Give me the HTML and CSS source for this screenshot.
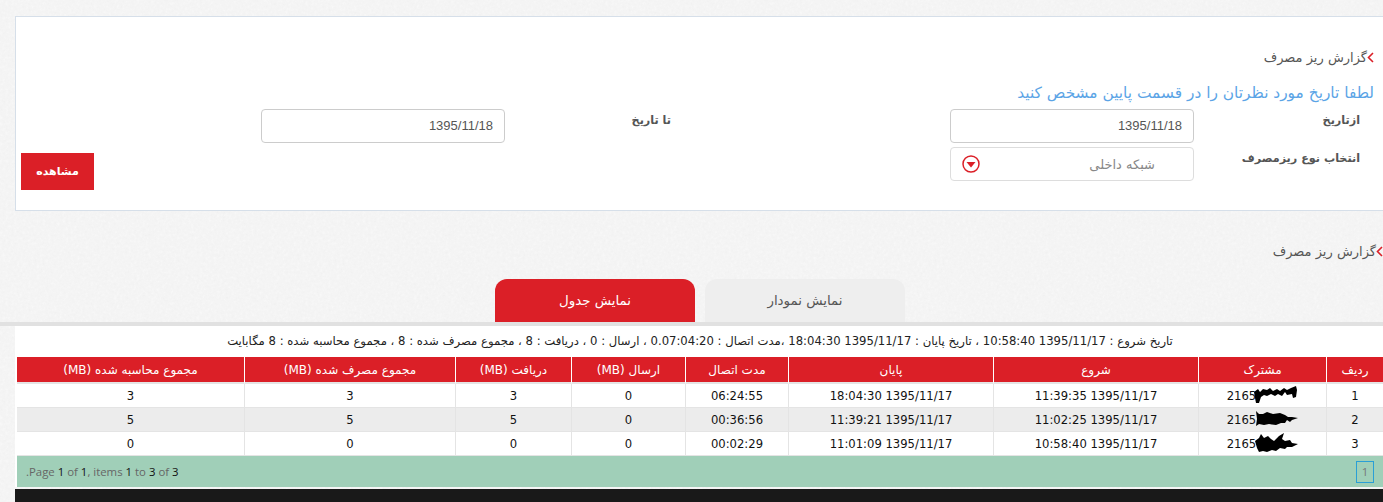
FILE: index.html
```html
<!DOCTYPE html>
<html lang="fa" dir="rtl">
<head>
<meta charset="utf-8">
<title>گزارش ریز مصرف</title>
<link rel="stylesheet" href="styles.css">
</head>
<body>
<section class="panel">
  <h2 class="title"><svg class="chev" width="7" height="11" viewBox="0 0 7 11"><path d="M6 1 1.5 5.5 6 10" fill="none" stroke="#db1f27" stroke-width="1.6"/></svg>گزارش ریز مصرف</h2>
  <p class="hint">لطفا تاریخ مورد نظرتان را در قسمت پایین مشخص کنید</p>
  <div class="form-row">
    <label class="lbl lbl-a">ازتاریخ</label>
    <div class="field date">1395/11/18</div>
    <label class="lbl lbl-b">تا تاریخ</label>
    <div class="field date">1395/11/18</div>
  </div>
  <div class="form-row row-two">
    <label class="lbl lbl-a">انتخاب نوع ریزمصرف</label>
    <div class="field select">
      <span class="sel-text">شبکه داخلی</span>
      <svg class="sel-icon" width="18" height="18" viewBox="0 0 18 18"><circle cx="9" cy="9" r="8" fill="#fff" stroke="#db1f27" stroke-width="1.5"/><path d="M4.5 7h9L9 12.5z" fill="#db1f27"/></svg>
    </div>
    <button class="btn">مشاهده</button>
  </div>
</section>

<h2 class="title title-two"><svg class="chev" width="7" height="11" viewBox="0 0 7 11"><path d="M6 1 1.5 5.5 6 10" fill="none" stroke="#db1f27" stroke-width="1.6"/></svg>گزارش ریز مصرف</h2>

<nav class="tabs">
  <a class="tab">نمایش نمودار</a>
  <a class="tab active">نمایش جدول</a>
</nav>

<div class="band">
<section class="content">
  <p class="summary">تاریخ شروع : 1395/11/17 10:58:40 ، تاریخ پایان : 1395/11/17 18:04:30 ،مدت اتصال : 0.07:04:20 ، ارسال : 0 ، دریافت : 8 ، مجموع مصرف شده : 8 ، مجموع محاسبه شده : 8 مگابایت</p>
  <table class="grid">
    <colgroup>
      <col class="c-row"><col class="c-user"><col class="c-time"><col class="c-time">
      <col class="c-dur"><col class="c-send"><col class="c-recv"><col class="c-used"><col class="c-calc">
    </colgroup>
    <thead>
      <tr><th>ردیف</th><th>مشترک</th><th>شروع</th><th>پایان</th><th>مدت اتصال</th><th>ارسال (MB)</th><th>دریافت (MB)</th><th>مجموع مصرف شده (MB)</th><th>مجموع محاسبه شده (MB)</th></tr>
    </thead>
    <tbody>
      <tr>
        <td>1</td>
        <td><span class="user">2165<svg class="blot" width="44" height="22" viewBox="0 0 44 22"><path d="M0 7 4 4 6 7 9 4 13 5 16 3 19 6 23 4 26 6 30 3 33 5 37 3 42 1 43 5 42 12 39 13 38 9 33 10 31 7 28 11 24 9 21 11 17 9 13 11 10 10 7 12 5 18 2 18 1 13z" fill="#000"/></svg></span></td>
        <td>1395/11/17 11:39:35</td><td>1395/11/17 18:04:30</td><td>06:24:55</td><td>0</td><td>3</td><td>3</td><td>3</td>
      </tr>
      <tr>
        <td>2</td>
        <td><span class="user">2165<svg class="blot" width="44" height="22" viewBox="0 0 44 22"><path d="M2 2 5 5 9 5 13 3 19 5 26 4 31 6 34 8 38 8 44 9 38 11 36 13 33 11 31 14 27 14 22 16 15 15 10 16 5 15 2 17 3 10z" fill="#000"/></svg></span></td>
        <td>1395/11/17 11:02:25</td><td>1395/11/17 11:39:21</td><td>00:36:56</td><td>0</td><td>5</td><td>5</td><td>5</td>
      </tr>
      <tr>
        <td>3</td>
        <td><span class="user">2165<svg class="blot" width="44" height="22" viewBox="0 0 44 22"><path d="M1 8 5 5 7 1 10 5 14 3 17 6 20 8 25 3 30 0 28 6 31 8 36 7 38 10 44 11 38 14 33 14 31 16 26 15 22 18 18 17 13 19 9 18 5 19 3 15z" fill="#000"/></svg></span></td>
        <td>1395/11/17 10:58:40</td><td>1395/11/17 11:01:09</td><td>00:02:29</td><td>0</td><td>0</td><td>0</td><td>0</td>
      </tr>
    </tbody>
  </table>
  <div class="pager">
    <span class="page-num">1</span>
    <span class="page-info">Page <b>1</b> of <b>1</b>, items <b>1</b> to <b>3</b> of <b>3</b>.</span>
  </div>
</section>
</div>
<footer class="footer"></footer>
</body>
</html>
```
FILE: styles.css
```css
* { box-sizing: border-box; }
html, body { margin: 0; height: 502px; overflow: hidden; }
body {
  padding-top: 16px;
  background-color: #f9f9f9;
  background-image: url("data:image/svg+xml;utf8,<svg xmlns='http://www.w3.org/2000/svg' width='300' height='300'><filter id='n'><feTurbulence type='fractalNoise' baseFrequency='0.35' numOctaves='3'/><feColorMatrix values='0 0 0 0 0.5 0 0 0 0 0.5 0 0 0 0 0.5 0 0 0 0.15 0'/></filter><rect width='300' height='300' filter='url(%23n)'/></svg>");
  color: #555;
  font-family: "DejaVu Sans", sans-serif;
  font-size: 12px;
}
.panel {
  height: 195px;
  margin-left: 15px;
  padding: 30px 9px 0 0;
  background: #fff;
  border: 1px solid #d6dfe9;
  border-right: 0;
}
.title {
  margin: 0;
  height: 22px;
  line-height: 22px;
  font-size: 13px;
  font-weight: 400;
  color: #555;
}
.chev { display: inline-block; vertical-align: -1px; }
.title-two { margin-top: 30px; }
.hint {
  margin: 13px 0 5px;
  height: 22px;
  line-height: 22px;
  font-size: 15.4px;
  color: #5ba4e6;
}
.form-row { display: flex; align-items: flex-start; }
.row-two { margin-top: 4px; }
.lbl {
  display: block;
  padding-top: 5px;
  font-weight: 700;
  font-size: 11.2px;
  line-height: 14px;
  color: #555;
}
.lbl-a { width: 180px; padding-right: 14px; }
.lbl-b { width: 445px; padding-right: 279px; }
.field {
  width: 244px;
  height: 34px;
  background: #fff;
  border: 1px solid #ccc;
  border-radius: 4px;
}
.date {
  padding: 0 11px;
  line-height: 32px;
  font-family: "Liberation Sans", sans-serif;
  font-size: 13px;
  text-align: right;
  color: #555;
}
.select {
  display: flex;
  align-items: center;
  justify-content: space-between;
  padding: 0 38px 0 11px;
  border-color: #ddd;
  color: #888;
  font-size: 13px;
}
.btn {
  width: 73px;
  height: 37px;
  margin: 6px auto 0 5px;
  padding: 0;
  background: #db1f27;
  border: 0;
  color: #fff;
  font: 700 11px "DejaVu Sans", sans-serif;
}
.tabs {
  display: flex;
  justify-content: center;
  gap: 10px;
  margin-top: 16px;
  padding-left: 17px;
}
.tab {
  display: block;
  width: 200px;
  height: 43px;
  line-height: 43px;
  text-align: center;
  background: #eee;
  color: #555;
  font-size: 13.4px;
  border-radius: 12px 12px 0 0;
}
.tab.active { background: #db1f27; color: #fff; }
.band { border-top: 4px solid #e1e1e1; }
.content {
  margin-left: 15px;
  padding-left: 2px;
  background: #fff;
}
.summary {
  margin: 0;
  height: 31px;
  line-height: 31px;
  text-align: center;
  color: #222;
  font-size: 11.65px;
  white-space: nowrap;
}
.grid {
  width: 1366px;
  table-layout: fixed;
  border-collapse: separate;
  border-spacing: 0;
}
.c-row { width: 57px; }
.c-user { width: 128px; }
.c-time { width: 205px; }
.c-dur { width: 103px; }
.c-send { width: 114px; }
.c-recv { width: 116px; }
.c-used { width: 211px; }
.c-calc { width: 227px; }
.grid th {
  height: 27px;
  padding: 0;
  background: #db1f27;
  color: #fff;
  font-weight: 400;
  font-size: 12px;
  text-align: center;
  border-left: 1px solid #fff;
  border-bottom: 2px solid #e4e4e4;
}
.grid th:last-child, .grid td:last-child { border-left: 0; }
.grid td {
  height: 24px;
  padding: 1px 0 0;
  text-align: center;
  color: #111;
  font-size: 11.6px;
  border-left: 1px solid #e4e4e4;
  border-bottom: 1px solid #e4e4e4;
}
.grid tbody tr:nth-child(2) td { background: #ececec; }
.grid tbody tr:last-child td { height: 23px; border-bottom: 0; }
.user {
  display: inline-flex;
  align-items: center;
  direction: ltr;
  height: 22px;
}
.blot { margin-left: -2px; }
.pager {
  display: flex;
  align-items: center;
  justify-content: space-between;
  height: 32px;
  margin-bottom: 2px;
  padding: 0 9px;
  background: #a0cfb8;
  border-top: 1px solid #e4e4e4;
  color: #666;
  font-family: "Open Sans", sans-serif;
  font-size: 11.4px;
}
.page-num {
  width: 18px;
  height: 22px;
  line-height: 20px;
  text-align: center;
  border: 1px solid #2a9fd6;
  color: #777;
}
.page-info b { font-weight: 400; color: #111; }
.footer { height: 13px; margin-left: 15px; background: #191919; }
```
